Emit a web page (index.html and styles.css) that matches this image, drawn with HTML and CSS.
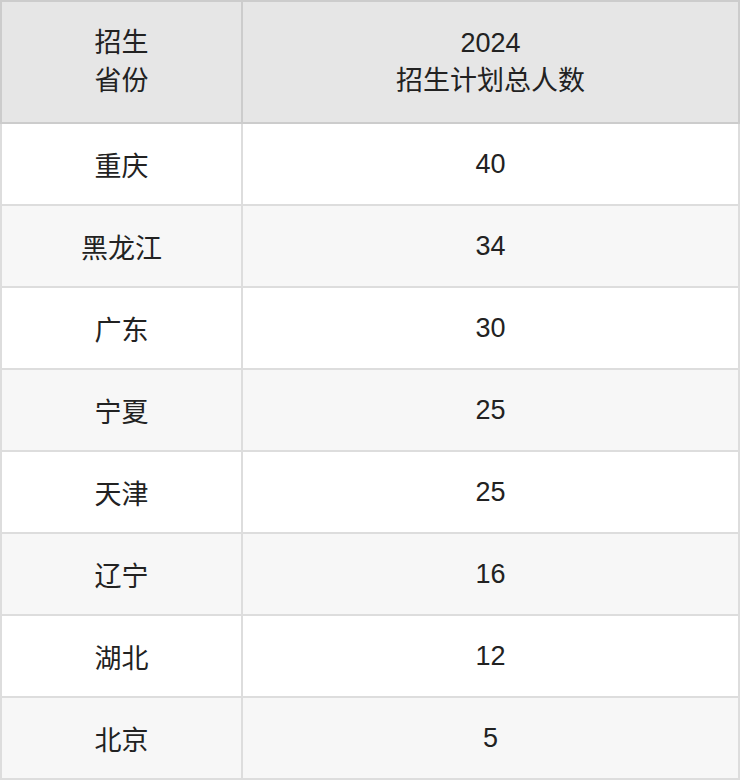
FILE: index.html
```html
<!DOCTYPE html>
<html lang="zh">
<head>
<meta charset="utf-8">
<link rel="stylesheet" href="styles.css">
</head>
<body>
<table class="plan">
  <thead>
    <tr>
      <th class="col-prov">招生<br>省份</th>
      <th class="col-num">2024<br>招生计划总人数</th>
    </tr>
  </thead>
  <tbody>
    <tr><td>重庆</td><td>40</td></tr>
    <tr><td>黑龙江</td><td>34</td></tr>
    <tr><td>广东</td><td>30</td></tr>
    <tr><td>宁夏</td><td>25</td></tr>
    <tr><td>天津</td><td>25</td></tr>
    <tr><td>辽宁</td><td>16</td></tr>
    <tr><td>湖北</td><td>12</td></tr>
    <tr><td>北京</td><td>5</td></tr>
  </tbody>
</table>
</body>
</html>
```
FILE: styles.css
```css
html, body {
  margin: 0;
  padding: 0;
  background: #ffffff;
}
.plan {
  width: 740px;
  border-collapse: collapse;
  table-layout: fixed;
  font-family: "Liberation Sans", "Noto Sans CJK SC", sans-serif;
  font-size: 27px;
  color: #222222;
}
.plan th,
.plan td {
  text-align: center;
  vertical-align: middle;
  padding: 0;
  font-weight: normal;
}
.plan th {
  background: #e6e6e6;
  border: 2px solid #cccccc;
  height: 120px;
  line-height: 38px;
}
.col-prov {
  width: 239px;
}
.plan td {
  border: 2px solid #dddddd;
  height: 80px;
}
.plan tbody tr:nth-child(even) td {
  background: #f7f7f7;
}
```
